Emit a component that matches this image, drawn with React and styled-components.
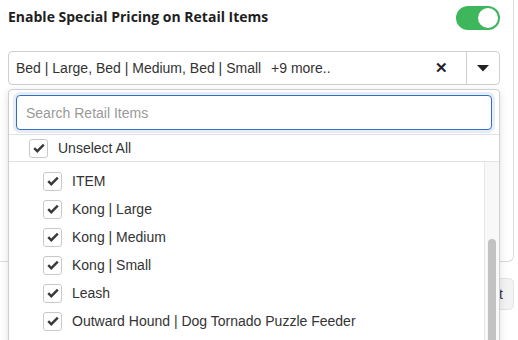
import React from "react";
import styled, { createGlobalStyle } from "styled-components";

const GlobalStyle = createGlobalStyle`
  * { box-sizing: border-box; }
  body {
    margin: 0;
    background: #fff;
    font-family: "Liberation Sans", Arial, sans-serif;
    color: #333;
  }
`;

const Page = styled.div`
  position: relative;
  width: 518px;
  height: 340px;
  overflow: hidden;
`;

const Card = styled.div`
  width: 514px;
  height: 262px;
  padding: 6px 13px 0 8px;
  border-right: 1px solid #dcdcdc;
  border-bottom: 1px solid #dcdcdc;
  border-bottom-right-radius: 6px;
`;

const Header = styled.div`
  display: flex;
  align-items: center;
  justify-content: space-between;
  height: 24px;
`;

const Title = styled.h3`
  margin: 0;
  margin-top: -4px;
  font-family: "Open Sans", sans-serif;
  font-size: 14px;
  font-weight: 700;
  color: #1e1e1e;
`;

const Toggle = styled.div`
  width: 44px;
  height: 24px;
  border-radius: 12px;
  background: #3db65c;
  display: flex;
  align-items: center;
  justify-content: flex-end;
  padding: 0 2px;
`;

const Knob = styled.span`
  width: 20px;
  height: 20px;
  border-radius: 50%;
  background: #fff;
`;

const Select = styled.div`
  margin-top: 21px;
  height: 34px;
  border: 1px solid #cfcfcf;
  border-radius: 4px;
  display: flex;
  align-items: center;
`;

const Value = styled.div`
  flex: 1;
  padding-left: 7px;
  font-size: 14px;
  color: #333;
  white-space: nowrap;
`;

const More = styled.span`
  margin-left: 6px;
`;

const Clear = styled.div`
  width: 32px;
  display: flex;
  justify-content: center;
  font-size: 15px;
  font-weight: 700;
  color: #222;
  margin-right: 9px;
`;

const Caret = styled.div`
  width: 33px;
  height: 100%;
  border-left: 1px solid #cfcfcf;
  display: flex;
  align-items: center;
  justify-content: center;
`;

const Footer = styled.div`
  width: 514px;
  display: flex;
  justify-content: flex-end;
  margin-top: 16px;
`;

const Button = styled.button`
  height: 32px;
  padding: 0 10px;
  border: 1px solid #e4e4e4;
  border-radius: 5px;
  background: #f3f3f3;
  font-family: "Liberation Sans", Arial, sans-serif;
  font-size: 14px;
  color: #333;
`;

const Menu = styled.div`
  position: absolute;
  left: 8px;
  top: 89px;
  width: 492px;
  height: 300px;
  background: #fff;
  border: 1px solid #cfcfcf;
  border-radius: 4px 4px 0 0;
  box-shadow: 0 2px 8px rgba(0, 0, 0, 0.12);
  display: flex;
  flex-direction: column;
  overflow: hidden;
`;

const SearchWrap = styled.div`
  padding: 5px 7px 4px 7px;
  border-bottom: 1px solid #e2e2e2;
`;

const Search = styled.input`
  width: 100%;
  height: 35px;
  border: 1px solid #2f6fc4;
  border-radius: 4px;
  padding: 0 9px;
  font-family: "Liberation Sans", Arial, sans-serif;
  font-size: 14px;
  color: #333;
  outline: none;
  box-shadow: 0 0 0 3px rgba(47, 111, 196, 0.12);
  &::placeholder { color: #999; }
`;

const Row = styled.div`
  display: flex;
  align-items: center;
  gap: 10px;
  height: ${(p) => p.$h || 28}px;
  padding-left: ${(p) => p.$indent}px;
  font-size: 14px;
  color: #333;
  white-space: nowrap;
`;

const AllRow = styled(Row)`
  border-bottom: 1px solid #e2e2e2;
`;

const Box = styled.span`
  width: 19px;
  height: 19px;
  flex: none;
  border: 1px solid #c9c9c9;
  border-radius: 3px;
  background: #fff;
  display: flex;
  align-items: center;
  justify-content: center;
`;

const ListArea = styled.div`
  flex: 1;
  display: flex;
  min-height: 0;
`;

const Items = styled.div`
  flex: 1;
  padding-top: 5px;
  overflow: hidden;
`;

const Track = styled.div`
  width: 15px;
  background: #f8f8f8;
  border-left: 1px solid #e6e6e6;
  display: flex;
  justify-content: center;
`;

const Thumb = styled.div`
  width: 8px;
  height: 200px;
  margin-top: 77px;
  border-radius: 4px;
  background: #c2c2c2;
`;

const Check = () => (
  <Box>
    <svg width="12" height="10" viewBox="0 0 12 10">
      <path d="M1.2 5.2 L4.3 8.2 L10.8 1.6" fill="none" stroke="#3a3a3a" strokeWidth="2.4" strokeLinejoin="miter" />
    </svg>
  </Box>
);

const items = [
  "ITEM",
  "Kong | Large",
  "Kong | Medium",
  "Kong | Small",
  "Leash",
  "Outward Hound | Dog Tornado Puzzle Feeder",
  "Rope Toy",
];

export default function App() {
  return (
    <Page>
      <GlobalStyle />
      <Card>
        <Header>
          <Title>Enable Special Pricing on Retail Items</Title>
          <Toggle>
            <Knob />
          </Toggle>
        </Header>
        <Select>
          <Value>
            Bed | Large, Bed | Medium, Bed | Small <More>+9 more..</More>
          </Value>
          <Clear>✕</Clear>
          <Caret>
            <svg width="12" height="7" viewBox="0 0 12 7">
              <path d="M0 0 H12 L6 6.5 Z" fill="#222" />
            </svg>
          </Caret>
        </Select>
      </Card>
      <Footer>
        <Button>Reset</Button>
      </Footer>
      <Menu>
        <SearchWrap>
          <Search placeholder="Search Retail Items" autoFocus />
        </SearchWrap>
        <AllRow $indent={20} $h={27}>
          <Check />
          Unselect All
        </AllRow>
        <ListArea>
          <Items>
            {items.map((it) => (
              <Row key={it} $indent={34}>
                <Check />
                {it}
              </Row>
            ))}
          </Items>
          <Track>
            <Thumb />
          </Track>
        </ListArea>
      </Menu>
    </Page>
  );
}
